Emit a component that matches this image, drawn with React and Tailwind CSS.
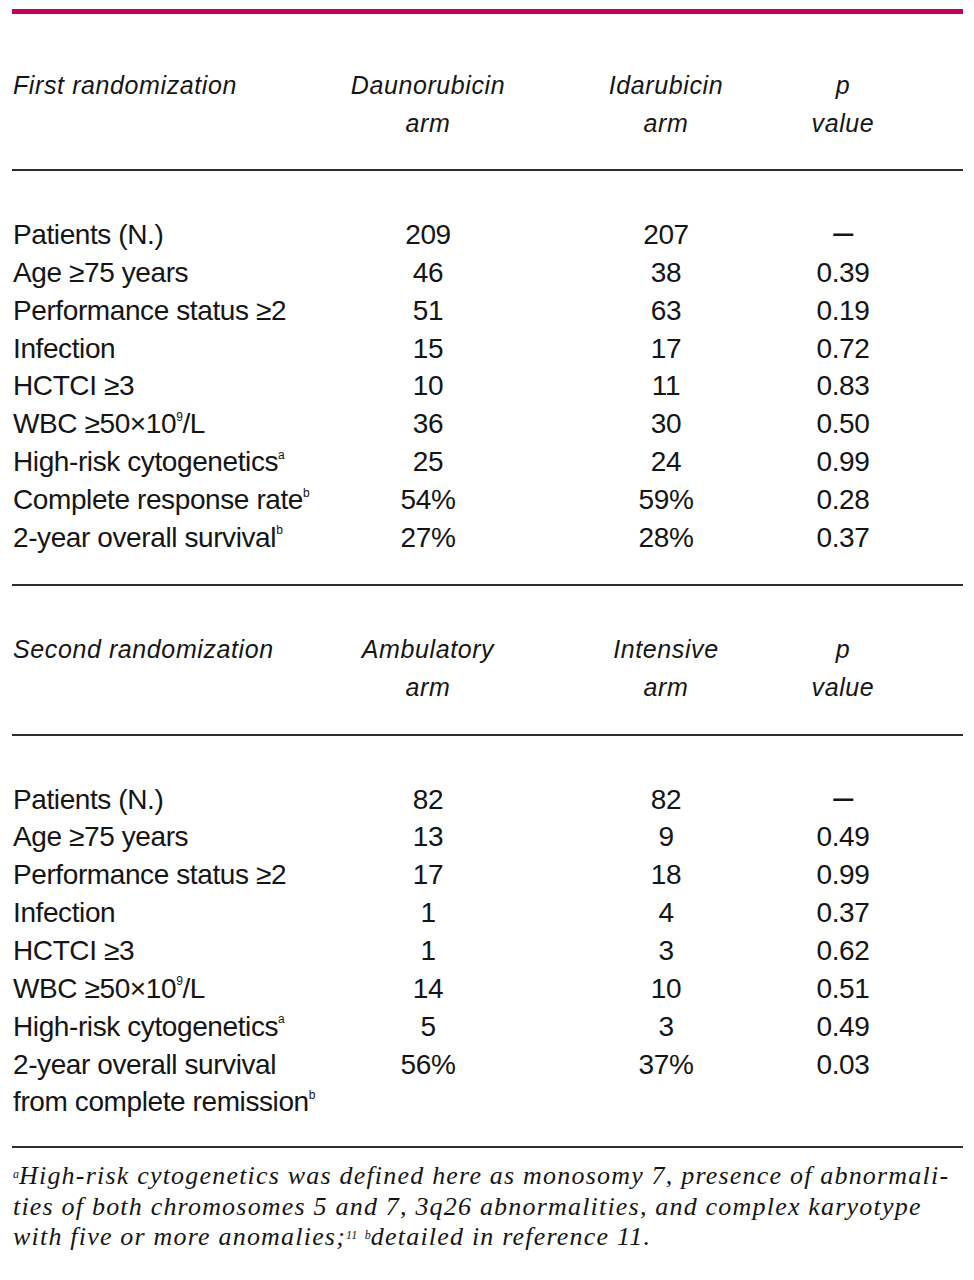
import React from "react";

const S = ({ children }) => (
  <sup className="text-[12px] relative top-[-2px] align-super leading-none">{children}</sup>
);

const Dash = () => <span className="text-[36px] leading-[0]">–</span>;

const first = [
  ["Patients (N.)", "209", "207", <Dash />],
  ["Age ≥75 years", "46", "38", "0.39"],
  ["Performance status ≥2", "51", "63", "0.19"],
  ["Infection", "15", "17", "0.72"],
  ["HCTCI ≥3", "10", "11", "0.83"],
  [<>WBC ≥50×10<S>9</S>/L</>, "36", "30", "0.50"],
  [<>High-risk cytogenetics<S>a</S></>, "25", "24", "0.99"],
  [<>Complete response rate<S>b</S></>, "54%", "59%", "0.28"],
  [<>2-year overall survival<S>b</S></>, "27%", "28%", "0.37"],
];

const second = [
  ["Patients (N.)", "82", "82", <Dash />],
  ["Age ≥75 years", "13", "9", "0.49"],
  ["Performance status ≥2", "17", "18", "0.99"],
  ["Infection", "1", "4", "0.37"],
  ["HCTCI ≥3", "1", "3", "0.62"],
  [<>WBC ≥50×10<S>9</S>/L</>, "14", "10", "0.51"],
  [<>High-risk cytogenetics<S>a</S></>, "5", "3", "0.49"],
  [<>2-year overall survival<br />from complete remission<S>b</S></>, "56%", "37%", "0.03"],
];

const cols = "grid grid-cols-[316px_200px_276px_78px]";

function Header({ label, a, b }) {
  return (
    <div className={`${cols} italic text-[25px] leading-[38px] tracking-[0.6px]`}>
      <div className="pl-[1px]">{label}</div>
      <div className="text-center">{a}<br />arm</div>
      <div className="text-center">{b}<br />arm</div>
      <div className="text-center">p<br />value</div>
    </div>
  );
}

function Rows({ rows }) {
  return (
    <div className="flex flex-col text-[28px] leading-[37.85px] tracking-[-0.4px]">
      {rows.map((r, i) => (
        <div key={i} className={cols}>
          <div className="pl-[1px]">{r[0]}</div>
          <div className="text-center">{r[1]}</div>
          <div className="text-center">{r[2]}</div>
          <div className="text-center">{r[3]}</div>
        </div>
      ))}
    </div>
  );
}

export default function App() {
  return (
    <div className="w-[974px] h-[1280px] bg-white text-[#151515] overflow-hidden" style={{ fontFamily: "'Liberation Sans', Arial, sans-serif" }}>
      <div className="ml-[12px] w-[951px] flex flex-col">
        <div className="mt-[9px] h-[5px] bg-[#c4005e]" />
        <div className="mt-[52px]">
          <Header label="First randomization" a="Daunorubicin" b="Idarubicin" />
        </div>
        <div className="mt-[27px] h-[2px] bg-[#2e2e2e]" />
        <div className="mt-[45px]">
          <Rows rows={first} />
        </div>
        <div className="mt-[27px] h-[2px] bg-[#2e2e2e]" />
        <div className="mt-[44px]">
          <Header label="Second randomization" a="Ambulatory" b="Intensive" />
        </div>
        <div className="mt-[28px] h-[2px] bg-[#2e2e2e]" />
        <div className="mt-[45px]">
          <Rows rows={second} />
        </div>
        <div className="mt-[25px] h-[2px] bg-[#2e2e2e]" />
        <div
          className="mt-[13px] pl-[1px] italic text-[26px] leading-[30.5px] tracking-[1.2px] whitespace-nowrap"
          style={{ fontFamily: "'Liberation Serif', 'DejaVu Serif', serif" }}
        >
          <div><sup className="text-[12px] tracking-normal">a</sup>High-risk cytogenetics was defined here as monosomy 7, presence of abnormali-</div>
          <div>ties of both chromosomes 5 and 7, 3q26 abnormalities, and complex karyotype</div>
          <div>with five or more anomalies;<sup className="text-[12px] tracking-normal">11</sup> <sup className="text-[12px] tracking-normal">b</sup>detailed in reference 11.</div>
        </div>
      </div>
    </div>
  );
}
